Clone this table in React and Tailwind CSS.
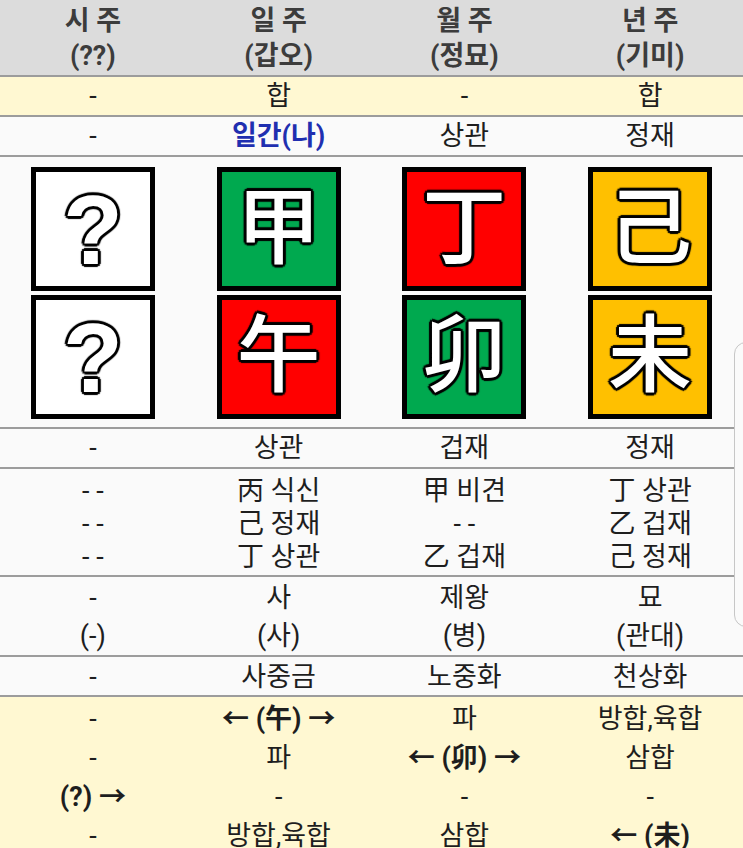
import React from 'react';

const FONT = { fontFamily: 'Roboto, "Noto Sans CJK KR", "Noto Sans", sans-serif' };

const HEADERS = [
    ['시 주', '(??)'],
    ['일 주', '(갑오)'],
    ['월 주', '(정묘)'],
    ['년 주', '(기미)'],
];

const PILLARS = [
    { top: '?', topBg: 'bg-white', bottom: '?', bottomBg: 'bg-white', unknown: true },
    { top: '甲', topBg: 'bg-[#00a94f]', bottom: '午', bottomBg: 'bg-[#ff0000]' },
    { top: '丁', topBg: 'bg-[#ff0000]', bottom: '卯', bottomBg: 'bg-[#00a94f]' },
    { top: '己', topBg: 'bg-[#ffc000]', bottom: '未', bottomBg: 'bg-[#ffc000]' },
];

const STEMS = [
    ['- -', '- -', '- -'],
    ['丙 식신', '己 정재', '丁 상관'],
    ['甲 비견', '- -', '乙 겁재'],
    ['丁 상관', '乙 겁재', '己 정재'],
];

const UNSEONG = [
    ['-', '(-)'],
    ['사', '(사)'],
    ['제왕', '(병)'],
    ['묘', '(관대)'],
];

// [text, bold]
const RELATIONS = [
    [['-'], ['-'], ['(?) →', true], ['-']],
    [['← (午) →', true], ['파'], ['-'], ['방합,육합']],
    [['파'], ['← (卯) →', true], ['-'], ['삼합']],
    [['방합,육합'], ['삼합'], ['-'], ['← (未)', true]],
];

function Row({ className = '', children }) {
    return (
        <div className={`grid grid-cols-4 border-b-2 border-[#9c9c9c] text-center ${className}`}>
            {children}
        </div>
    );
}

function Box({ char, bg, unknown }) {
    return (
        <div
            className={`w-[124px] h-[124px] border-[5px] border-black flex items-center justify-center ${bg}`}
        >
            <span
                className={`text-white leading-none [text-shadow:-2px_-2px_1px_#000,2px_-2px_1px_#000,-2px_2px_1px_#000,2px_2px_1px_#000,0_-3px_1px_#000,0_3px_1px_#000,-3px_0_1px_#000,3px_0_1px_#000] ${
                    unknown ? 'text-[98px] font-bold pt-[2px]' : 'text-[84px] font-medium'
                }`}
                style={unknown ? { fontFamily: '"Liberation Sans", Arial, sans-serif' } : FONT}
            >
                {char}
            </span>
        </div>
    );
}

export default function App() {
    return (
        <div className="relative w-[743px] h-[848px] overflow-hidden bg-[#fafafa] text-[27px] text-[#1e1e1e]" style={FONT}>
            {/* Header */}
            <Row className="bg-[#dcdcdc] pt-[4px] h-[77px] text-[#3c3c3c] font-bold text-[27px] leading-[35px]">
                {HEADERS.map(([a, b]) => (
                    <div key={a}>
                        <div>{a}</div>
                        <div>{b}</div>
                    </div>
                ))}
            </Row>

            <Row className="bg-[#fff8d2] pt-[1px] leading-[37px]">
                <div>-</div>
                <div>합</div>
                <div>-</div>
                <div>합</div>
            </Row>

            <Row className="pt-[1px] leading-[37px]">
                <div>-</div>
                <div className="text-[#1f2fb0] font-bold">일간(나)</div>
                <div>상관</div>
                <div>정재</div>
            </Row>

            {/* Pillar boxes */}
            <Row className="pt-[10px] pb-[8px]">
                {PILLARS.map((p, i) => (
                    <div key={i} className="flex flex-col items-center gap-[4px]">
                        <Box char={p.top} bg={p.topBg} unknown={p.unknown} />
                        <Box char={p.bottom} bg={p.bottomBg} unknown={p.unknown} />
                    </div>
                ))}
            </Row>

            <Row className="pt-[1px] leading-[37px]">
                <div>-</div>
                <div>상관</div>
                <div>겁재</div>
                <div>정재</div>
            </Row>

            {/* Hidden stems */}
            <Row className="pt-[6px] pb-[1px] leading-[33px]">
                {STEMS.map((col, i) => (
                    <div key={i}>
                        {col.map((s, j) => (
                            <div key={j}>{s}</div>
                        ))}
                    </div>
                ))}
            </Row>

            <Row className="pt-[2px] leading-[38px]">
                {UNSEONG.map(([a, b], i) => (
                    <div key={i}>
                        <div>{a}</div>
                        <div>{b}</div>
                    </div>
                ))}
            </Row>

            <Row className="pt-[2px] leading-[36px]">
                <div>-</div>
                <div>사중금</div>
                <div>노중화</div>
                <div>천상화</div>
            </Row>

            {/* Relations */}
            <div className="grid grid-cols-4 bg-[#fff8d2] text-center pt-[3px] leading-[39px] h-full">
                {RELATIONS.map((col, i) => (
                    <div key={i}>
                        {col.map(([t, bold], j) => (
                            <div key={j} className={bold ? 'font-bold' : ''}>
                                {t}
                            </div>
                        ))}
                    </div>
                ))}
            </div>

            {/* edge handle overlay */}
            <div className="absolute left-[734px] top-[342px] w-[20px] h-[285px] rounded-l-[12px] border-[1.5px] border-[#c6c6c6] bg-[#fafafa]" />
        </div>
    );
}
